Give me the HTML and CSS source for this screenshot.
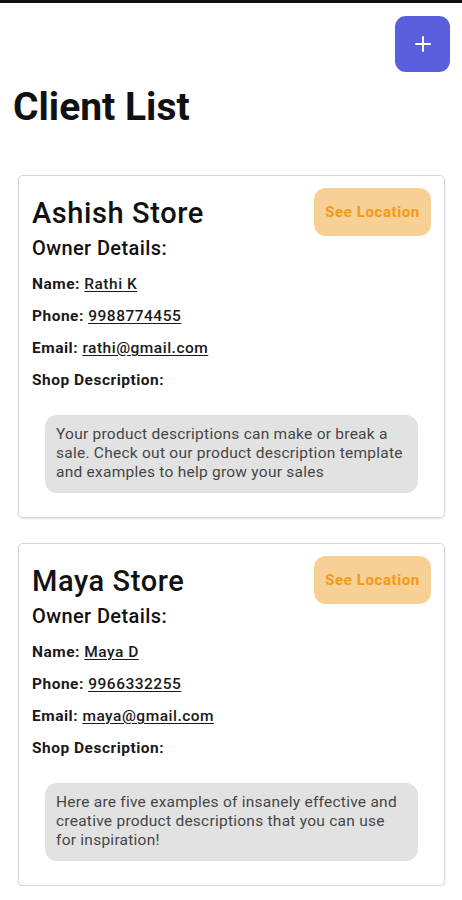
FILE: index.html
```html
<!DOCTYPE html>
<html lang="en">

<head>
    <meta charset="UTF-8">
    <meta name="viewport" content="width=device-width, initial-scale=1.0">
    <title>Client List</title>
    <link rel="stylesheet" href="styles.css">
</head>

<body>
    <div class="top-bar"></div>

    <!-- Header -->
    <div class="toolbar">
        <button class="add-btn" aria-label="Add client">
            <svg width="16" height="16" viewBox="0 0 16 16">
                <path d="M8 1v14M1 8h14" stroke="#ffffff" stroke-width="2" stroke-linecap="round" fill="none" />
            </svg>
        </button>
    </div>

    <h1 class="page-title">Client List</h1>

    <!-- Clients -->
    <div class="client-list">
        <div class="card">
            <div class="card-head">
                <h2>Ashish Store</h2>
                <button class="location-btn">See Location</button>
            </div>
            <h3>Owner Details:</h3>
            <p class="row">Name: <span class="value">Rathi K</span></p>
            <p class="row">Phone: <span class="value">9988774455</span></p>
            <p class="row">Email: <span class="value">rathi@gmail.com</span></p>
            <p class="row">Shop Description:</p>
            <div class="description">Your product descriptions can make or break a sale. Check out our product description template and examples to help grow your sales</div>
        </div>

        <div class="card">
            <div class="card-head">
                <h2>Maya Store</h2>
                <button class="location-btn">See Location</button>
            </div>
            <h3>Owner Details:</h3>
            <p class="row">Name: <span class="value">Maya D</span></p>
            <p class="row">Phone: <span class="value">9966332255</span></p>
            <p class="row">Email: <span class="value">maya@gmail.com</span></p>
            <p class="row">Shop Description:</p>
            <div class="description">Here are five examples of insanely effective and creative product descriptions that you can use for inspiration!</div>
        </div>
    </div>
</body>

</html>
```

FILE: styles.css
```css
/* General Styles */
body {
    font-family: Roboto, "Noto Sans", Arial, sans-serif;
    margin: 0;
    padding: 0;
    background-color: #ffffff;
    color: #111111;
}

.top-bar {
    height: 3px;
    background-color: #111111;
}

.toolbar {
    display: flex;
    justify-content: flex-end;
    padding: 13px 12px 0 0;
}

.add-btn {
    width: 55px;
    height: 56px;
    border: none;
    border-radius: 11px;
    background-color: #5a5fdd;
    display: flex;
    align-items: center;
    justify-content: center;
    cursor: pointer;
}

.page-title {
    margin: 13px 0 0 13px;
    font-size: 39px;
    line-height: 44px;
    font-weight: 700;
}

.client-list {
    display: flex;
    flex-direction: column;
    gap: 25px;
    padding: 46px 17px 0 18px;
}

.card {
    border: 1px solid #d6d6d6;
    border-radius: 5px;
    box-shadow: 0 1px 2px rgba(0, 0, 0, 0.12);
    padding: 12px 13px 12px 13px;
}

.card-head {
    display: flex;
    justify-content: space-between;
    align-items: flex-start;
}

.card-head h2 {
    margin: 9px 0 0 0;
    font-size: 29px;
    line-height: 33px;
    font-weight: 500;
    letter-spacing: 0.6px;
}

.location-btn {
    width: 117px;
    height: 48px;
    border: none;
    border-radius: 12px;
    background-color: #f7d096;
    color: #f59a0c;
    font-family: Roboto, Arial, sans-serif;
    font-size: 15px;
    font-weight: 700;
    letter-spacing: 0.6px;
    cursor: pointer;
}

.card h3 {
    margin: 1px 0 9px 0;
    font-size: 20px;
    line-height: 22px;
    font-weight: 500;
    letter-spacing: 0.4px;
}

.row {
    margin: 0;
    font-size: 15.5px;
    line-height: 32px;
    font-weight: 700;
    letter-spacing: 0.5px;
    color: #1a1a1a;
}

.value {
    font-weight: 500;
    text-decoration: underline;
    text-underline-offset: 2px;
    text-decoration-thickness: 1px;
}

.description {
    margin: 19px 13px 12px 13px;
    padding: 10px 11px 11px 11px;
    background-color: #e2e2e2;
    border-radius: 12px;
    color: #464646;
    font-size: 15.5px;
    line-height: 19px;
    letter-spacing: 0.25px;
}
```
